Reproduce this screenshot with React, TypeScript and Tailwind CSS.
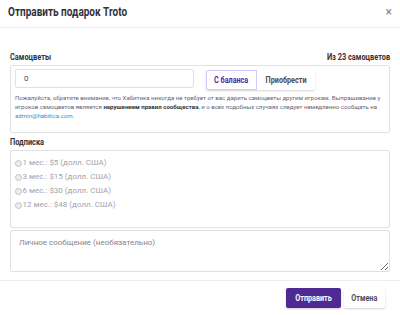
import { useState } from 'react';

const plans = [
  '1 мес.: $5 (долл. США)',
  '3 мес.: $15 (долл. США)',
  '6 мес.: $30 (долл. США)',
  '12 мес.: $48 (долл. США)',
];

// Roboto Condensed is not installed, so headings are narrowed with scale-x
export default function App() {
  const [source, setSource] = useState<'balance' | 'buy'>('balance');

  return (
    <div className="w-[400px] h-[315px] bg-white overflow-hidden font-['Roboto',sans-serif] text-[#34313a]">
      {/* Header */}
      <div className="h-[28px] flex items-start justify-between pl-[8px] pr-[8px] pt-[4px] border-b border-[#ededed]">
        <h2 className="text-[12.5px] font-bold leading-[16px] whitespace-nowrap origin-left scale-x-[0.8]">
          Отправить подарок Troto
        </h2>
        <button className="text-[#878190] text-[12px] leading-[16px]">×</button>
      </div>

      <div className="px-[10px]">
        {/* Gems */}
        <div className="flex justify-between items-end mt-[23px] h-[12px]">
          <span className="inline-block text-[9px] font-bold leading-[12px] whitespace-nowrap origin-left scale-x-[0.82]">Самоцветы</span>
          <span className="inline-block text-[9px] font-bold leading-[12px] whitespace-nowrap origin-right scale-x-[0.82]">Из 23 самоцветов</span>
        </div>
        <div className="mt-[2px] border border-[#e1e0e3] rounded-[2px] h-[68px] px-[4px] pt-[3px]">
          <div className="flex items-start">
            <input
              defaultValue="0"
              className="w-[179px] h-[19px] border border-[#e1e0e3] rounded-[2px] px-[8px] text-[8px] text-[#4e4a57] outline-none"
            />
            <div className="flex ml-[12px] mt-[1px] shadow-[0_1px_2px_rgba(26,24,29,0.18)] rounded-[2px]">
              <button
                onClick={() => setSource('balance')}
                className={`w-[51px] h-[20px] text-[8.5px] font-bold rounded-l-[2px] border ${source === 'balance' ? 'text-[#4f2a93] border-[#d5c8ff]' : 'text-[#4e4a57] border-transparent'} bg-white`}
              >
                <span className="inline-block whitespace-nowrap scale-x-[0.85]">С баланса</span>
              </button>
              <button
                onClick={() => setSource('buy')}
                className={`w-[58px] h-[20px] text-[8.5px] font-bold rounded-r-[2px] border ${source === 'buy' ? 'text-[#4f2a93] border-[#d5c8ff]' : 'text-[#4e4a57] border-transparent'} bg-white`}
              >
                <span className="inline-block whitespace-nowrap scale-x-[0.85]">Приобрести</span>
              </button>
            </div>
          </div>
          <p className="mt-[3px] text-[6.1px] leading-[9px] text-[#686274]">
            Пожалуйста, обратите внимание, что Хабитика никогда не требует от вас дарить самоцветы другим игрокам. Выпрашивание у игроков самоцветов является{' '}
            <strong className="text-[#34313a]">нарушением правил сообщества</strong>, и о всех подобных случаях следует немедленно сообщать на{' '}
            <a className="text-[#2995cd]">admin@habitica.com</a>.
          </p>
        </div>

        {/* Subscription */}
        <div className="mt-[3px] h-[12px] flex items-end">
          <span className="inline-block text-[9px] font-bold leading-[12px] whitespace-nowrap origin-left scale-x-[0.82]">Подписка</span>
        </div>
        <div className="mt-[2px] border border-[#e1e0e3] rounded-[2px] h-[78px] pt-[5px] pl-[4px]">
          {plans.map((p) => (
            <label key={p} className="flex items-center h-[14px] text-[8px] text-[#a5a1ac]">
              <span className="w-[7px] h-[7px] rounded-full border border-[#c3c0c7] bg-[#ededed] mr-[0.5px]" />
              {p}
            </label>
          ))}
        </div>

        {/* Message */}
        <textarea
          placeholder="Личное сообщение (необязательно)"
          className="block w-full mt-[2px] h-[42px] border border-[#e1e0e3] rounded-[2px] px-[8px] py-[6px] text-[8px] text-[#4e4a57] placeholder:text-[#878190] outline-none resize-y"
        />
      </div>

      {/* Footer */}
      <div className="mt-[8px] border-t border-[#ededed] flex justify-end gap-[3px] pt-[7px] pr-[15px]">
        <button className="w-[55px] h-[20px] bg-[#4f2a93] text-white text-[8.5px] font-bold rounded-[2px] shadow-[0_1px_2px_rgba(26,24,29,0.2)]">
          <span className="inline-block whitespace-nowrap scale-x-[0.85]">Отправить</span>
        </button>
        <button className="w-[41px] h-[20px] bg-white text-[#4e4a57] text-[8.5px] font-bold rounded-[2px] shadow-[0_1px_2px_rgba(26,24,29,0.2)]">
          <span className="inline-block whitespace-nowrap scale-x-[0.85]">Отмена</span>
        </button>
      </div>
    </div>
  );
}
